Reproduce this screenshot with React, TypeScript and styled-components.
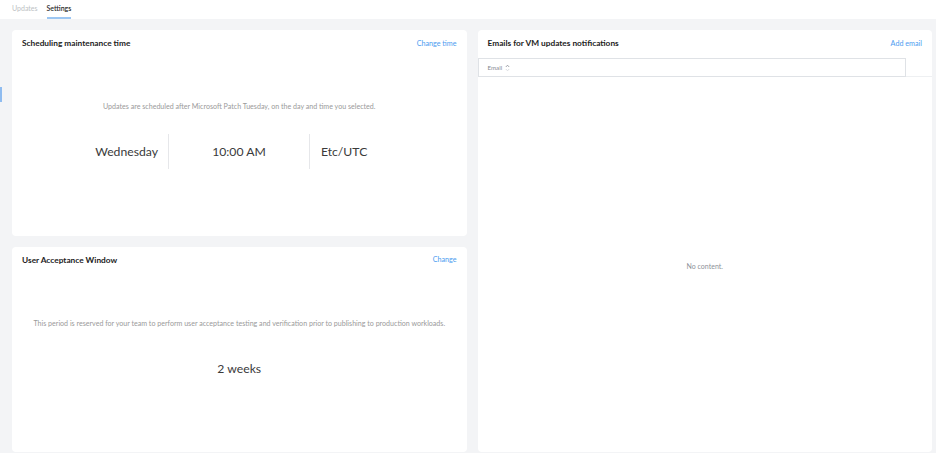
import styled, { createGlobalStyle } from 'styled-components';

const GlobalStyle = createGlobalStyle`
	html, body {
		margin: 0;
		padding: 0;
		height: 100%;
	}
	body {
		font-family: Lato, "Open Sans", "Liberation Sans", sans-serif;
		color: #333;
		background: #fff;
	}
	#root {
		height: 100%;
	}
`;

const SortIcon = () => (
	<svg width="5" height="8" viewBox="0 0 5 8" fill="none">
		<path d="M0.8 3 L2.5 1.2 L4.2 3" stroke="#8a8f98" strokeWidth="0.8" />
		<path d="M0.8 5 L2.5 6.8 L4.2 5" stroke="#d3d6da" strokeWidth="0.8" />
	</svg>
);

const App = () => {
	return (
		<>
			<GlobalStyle />
			<StyledPage>
				<Tabs>
					<Tab>Updates</Tab>
					<Tab active>Settings</Tab>
				</Tabs>
				<Content>
					<ScrollMark />
					<Card className="schedule">
						<CardHeader>
							<h2>Scheduling maintenance time</h2>
							<LinkButton>Change time</LinkButton>
						</CardHeader>
						<CardBody>
							<Description>
								Updates are scheduled after Microsoft Patch Tuesday, on the day and time you selected.
							</Description>
							<ValueRow offset>
								<Value align="right">Wednesday</Value>
								<Divider />
								<Value wide>10:00 AM</Value>
								<Divider />
								<Value align="left">Etc/UTC</Value>
							</ValueRow>
						</CardBody>
					</Card>
					<Card className="emails">
						<CardHeader>
							<h2>Emails for VM updates notifications</h2>
							<LinkButton>Add email</LinkButton>
						</CardHeader>
						<Table>
							<TableHead>
								<HeadCell>
									Email <SortIcon />
								</HeadCell>
							</TableHead>
							<Empty>No content.</Empty>
						</Table>
					</Card>
					<Card className="uaw">
						<CardHeader>
							<h2>User Acceptance Window</h2>
							<LinkButton>Change</LinkButton>
						</CardHeader>
						<CardBody>
							<Description>
								This period is reserved for your team to perform user acceptance testing and verification prior to
								publishing to production workloads.
							</Description>
							<ValueRow>
								<Value>2 weeks</Value>
							</ValueRow>
						</CardBody>
					</Card>
				</Content>
			</StyledPage>
		</>
	);
};

const StyledPage = styled.div`
	height: 100%;
	display: flex;
	flex-direction: column;
`;

const Tabs = styled.div`
	height: 19px;
	display: flex;
	gap: 9px;
	padding-left: 12px;
	box-sizing: border-box;
	background: #fff;
`;

const Tab = styled.div<{ active?: boolean }>`
	font-size: 7px;
	line-height: 17px;
	color: ${(p) => (p.active ? '#2b2b2b' : '#bcbfc4')};
	font-weight: ${(p) => (p.active ? 600 : 400)};
	border-bottom: 2px solid ${(p) => (p.active ? '#9cc6f2' : 'transparent')};
`;

const Content = styled.div`
	position: relative;
	flex: 1;
	background: #f3f4f6;
	padding: 11px 4px 1px 12px;
	display: grid;
	grid-template-columns: 1fr 1fr;
	grid-template-rows: 1fr 1fr;
	column-gap: 11px;
	row-gap: 11px;
	min-height: 0;

	& .schedule {
		grid-column: 1;
		grid-row: 1;
	}
	& .emails {
		grid-column: 2;
		grid-row: 1 / span 2;
	}
	& .uaw {
		grid-column: 1;
		grid-row: 2;
	}
`;

const ScrollMark = styled.div`
	position: absolute;
	left: 0;
	top: 68px;
	width: 2px;
	height: 15px;
	background: #8fbcf0;
`;

const Card = styled.section`
	background: #fff;
	border-radius: 4px;
	display: flex;
	flex-direction: column;
	min-height: 0;
	overflow: hidden;
`;

const CardHeader = styled.div`
	height: 28px;
	display: flex;
	align-items: center;
	justify-content: space-between;
	padding: 0 10px 2px 10px;
	box-sizing: border-box;

	& h2 {
		margin: 0;
		font-size: 8.3px;
		font-weight: 700;
		color: #222;
	}
`;

const LinkButton = styled.span`
	font-size: 7.2px;
	color: #4c9cf0;
	cursor: pointer;
`;

const CardBody = styled.div`
	padding-top: 44px;
	display: flex;
	flex-direction: column;
	align-items: center;
`;

const Description = styled.p`
	margin: 0;
	font-size: 7.1px;
	line-height: 10px;
	color: #9a9a9a;
	text-align: center;
`;

const ValueRow = styled.div<{ offset?: boolean }>`
	margin-top: 22px;
	height: 35px;
	display: flex;
	align-items: center;
	justify-content: center;
	padding-right: ${(p) => (p.offset ? '16px' : '0')};
`;

const Value = styled.div<{ align?: 'left' | 'right'; wide?: boolean }>`
	font-size: 12.2px;
	color: #3a3a3a;
	width: ${(p) => (p.wide ? '140px' : 'auto')};
	text-align: center;
	padding: ${(p) => (p.align === 'right' ? '0 10px 0 0' : p.align === 'left' ? '0 0 0 11px' : '0')};
`;

const Divider = styled.div`
	width: 1px;
	align-self: stretch;
	background: #e6e7ea;
`;

const Table = styled.div`
	flex: 1;
	display: flex;
	flex-direction: column;
`;

const TableHead = styled.div`
	border-bottom: 1px solid #eef0f2;
	padding-right: 26px;
`;

const HeadCell = styled.div`
	height: 19px;
	border: 1px solid #dfe2e6;
	box-sizing: border-box;
	display: flex;
	align-items: center;
	gap: 3px;
	padding-left: 9px;
	font-size: 6.2px;
	color: #858a92;
	margin-bottom: -1px;
`;

const Empty = styled.div`
	flex: 1;
	display: flex;
	align-items: center;
	justify-content: center;
	font-size: 7px;
	color: #8d9199;
	padding-top: 2px;
`;

export default App;
